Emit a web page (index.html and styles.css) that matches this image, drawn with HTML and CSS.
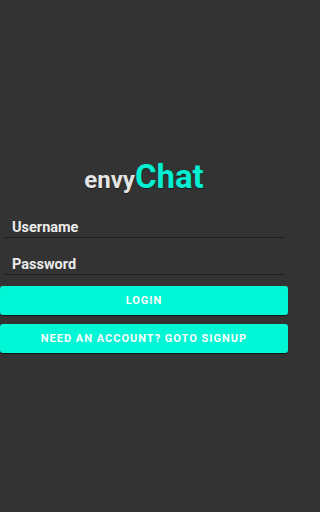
FILE: index.html
```html
<!DOCTYPE html>
<html>
<head>
<meta charset="utf-8">
<link rel="stylesheet" href="styles.css">
</head>
<body>
<div class="screen">
  <h1 class="logo"><span class="envy">envy</span><span class="chat">Chat</span></h1>
  <div class="fields">
    <div class="field"><span class="label">Username</span></div>
    <div class="field"><span class="label">Password</span></div>
  </div>
  <div class="buttons">
    <button class="btn">LOGIN</button>
    <button class="btn">NEED AN ACCOUNT? GOTO SIGNUP</button>
  </div>
</div>
</body>
</html>
```
FILE: styles.css
```css
html, body {
  margin: 0;
  padding: 0;
  background: #333333;
}
.screen {
  width: 288px;
  height: 512px;
  display: flex;
  flex-direction: column;
  font-family: Roboto, "Liberation Sans", sans-serif;
  padding-top: 158px;
  box-sizing: border-box;
}
.logo {
  margin: 0;
  text-align: center;
  font-weight: 700;
  line-height: 38px;
  height: 38px;
  text-shadow: 0 1px 1px rgba(0,0,0,0.5);
}
.envy {
  font-size: 24px;
  color: #e4e4e4;
}
.chat {
  font-size: 33px;
  color: #00efd2;
}
.fields {
  margin-top: 5px;
  display: flex;
  flex-direction: column;
}
.field {
  margin: 0 3px 0 4px;
  border-bottom: 1px solid #1f1f1f;
  padding: 0 0 1px 8px;
  height: 37px;
  display: flex;
  align-items: flex-end;
  box-sizing: border-box;
}
.label {
  font-size: 14.5px;
  font-weight: 700;
  color: #ececec;
  line-height: 17px;
}
.buttons {
  margin-top: 11px;
  display: flex;
  flex-direction: column;
  gap: 9px;
}
.btn {
  height: 29px;
  margin: 0;
  border: none;
  border-radius: 3px;
  background: #00f7d6;
  color: #ffffff;
  font-family: Roboto, "Liberation Sans", sans-serif;
  font-weight: 700;
  font-size: 11px;
  letter-spacing: 1px;
  box-shadow: 0 1px 1px rgba(0,0,0,0.6);
  padding: 0;
}
```
